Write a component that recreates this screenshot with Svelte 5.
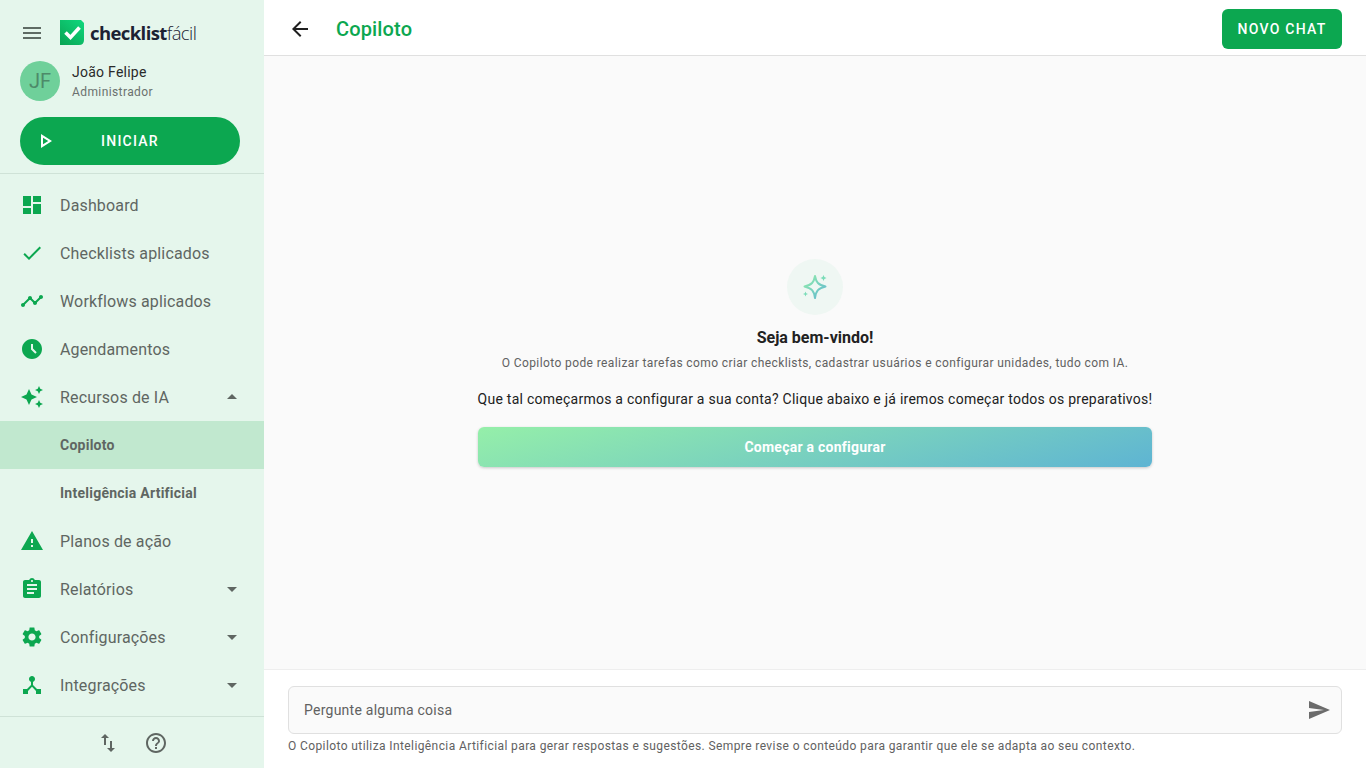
<script lang="ts">
	const navItems = [
		{ label: 'Dashboard', icon: 'M3 13h8V3H3v10zm0 8h8v-6H3v6zm10 0h8V11h-8v10zm0-18v6h8V3h-8z' },
		{ label: 'Checklists aplicados', icon: 'M9 16.17L4.83 12l-1.42 1.41L9 19 21 7l-1.41-1.41z' },
		{
			label: 'Workflows aplicados',
			icon: 'M23 8c0 1.1-.9 2-2 2-.18 0-.35-.02-.51-.07l-3.56 3.55c.05.16.07.34.07.52 0 1.1-.9 2-2 2s-2-.9-2-2c0-.18.02-.36.07-.52l-2.55-2.55c-.16.05-.34.07-.52.07s-.36-.02-.52-.07l-4.55 4.56c.05.16.07.33.07.51 0 1.1-.9 2-2 2s-2-.9-2-2 .9-2 2-2c.18 0 .35.02.51.07l4.56-4.55C8.02 9.36 8 9.18 8 9c0-1.1.9-2 2-2s2 .9 2 2c0 .18-.02.36-.07.52l2.55 2.55c.16-.05.34-.07.52-.07s.36.02.52.07l3.55-3.56C19.02 8.35 19 8.18 19 8c0-1.1.9-2 2-2s2 .9 2 2z'
		},
		{
			label: 'Agendamentos',
			icon: 'M11.99 2C6.47 2 2 6.48 2 12s4.47 10 9.99 10C17.52 22 22 17.52 22 12S17.52 2 11.99 2zm3.3 14.71L11 12.41V7h2v4.59l3.71 3.71-1.42 1.41z'
		},
		{
			label: 'Recursos de IA',
			caret: 'up',
			icon: 'M19 9l1.25-2.75L23 5l-2.75-1.25L19 1l-1.25 2.75L15 5l2.75 1.25L19 9zm-7.5.5L9 4 6.5 9.5 1 12l5.5 2.5L9 20l2.5-5.5L17 12l-5.5-2.5zM19 15l-1.25 2.75L15 19l2.75 1.25L19 23l1.25-2.75L23 19l-2.75-1.25L19 15z'
		},
		{ label: 'Copiloto', sub: true, active: true },
		{ label: 'Inteligência Artificial', sub: true },
		{ label: 'Planos de ação', icon: 'M1 21h22L12 2 1 21zm12-3h-2v-2h2v2zm0-4h-2v-4h2v4z' },
		{
			label: 'Relatórios',
			caret: 'down',
			icon: 'M19 3h-4.18C14.4 1.84 13.3 1 12 1c-1.3 0-2.4.84-2.82 2H5c-1.1 0-2 .9-2 2v14c0 1.1.9 2 2 2h14c1.1 0 2-.9 2-2V5c0-1.1-.9-2-2-2zm-7 0c.55 0 1 .45 1 1s-.45 1-1 1-1-.45-1-1 .45-1 1-1zm2 14H7v-2h7v2zm3-4H7v-2h10v2zm0-4H7V7h10v2z'
		},
		{
			label: 'Configurações',
			caret: 'down',
			icon: 'M19.14 12.94c.04-.3.06-.61.06-.94 0-.32-.02-.64-.07-.94l2.03-1.58c.18-.14.23-.41.12-.61l-1.92-3.32c-.12-.22-.37-.29-.59-.22l-2.39.96c-.5-.38-1.03-.7-1.62-.94l-.36-2.54c-.04-.24-.24-.41-.48-.41h-3.84c-.24 0-.43.17-.47.41l-.36 2.54c-.59.24-1.13.57-1.62.94l-2.39-.96c-.22-.08-.47 0-.59.22L2.74 8.87c-.12.21-.08.47.12.61l2.03 1.58c-.05.3-.09.63-.09.94s.02.64.07.94l-2.03 1.58c-.18.14-.23.41-.12.61l1.92 3.32c.12.22.37.29.59.22l2.39-.96c.5.38 1.03.7 1.62.94l.36 2.54c.05.24.24.41.48.41h3.84c.24 0 .44-.17.47-.41l.36-2.54c.59-.24 1.13-.56 1.62-.94l2.39.96c.22.08.47 0 .59-.22l1.92-3.32c.12-.22.07-.47-.12-.61l-2.01-1.58zM12 15.6c-1.98 0-3.6-1.62-3.6-3.6s1.62-3.6 3.6-3.6 3.6 1.62 3.6 3.6-1.62 3.6-3.6 3.6z'
		},
		{
			label: 'Integrações',
			caret: 'down',
			icon: 'M17 16l-4-4V8.82C14.16 8.4 15 7.3 15 6c0-1.66-1.34-3-3-3S9 4.34 9 6c0 1.3.84 2.4 2 2.82V12l-4 4H3v5h5v-3.05l4-4.2 4 4.2V21h5v-5h-4z'
		}
	];
</script>

<div class="app">
	<aside class="sidebar">
		<div class="head">
			<div class="brand">
				<svg class="menu" viewBox="0 0 24 24"><path d="M3 18h18v-2H3v2zm0-5h18v-2H3v2zm0-7v2h18V6H3z" /></svg>
				<svg class="logo" viewBox="0 0 24 25">
					<defs>
						<linearGradient id="lg" x1="0.9" y1="0" x2="0.1" y2="1">
							<stop offset="0" stop-color="#0fd67c" />
							<stop offset="1" stop-color="#0aa555" />
						</linearGradient>
					</defs>
					<path d="M0 0H21L24 3V20Q24 25 19 25H0Z" fill="url(#lg)" />
					<path d="M5.5 12.5L10.5 17.5L19.5 7.5" fill="none" stroke="#fff" stroke-width="3.6" />
				</svg>
				<span class="wordmark"><b>checklist</b><span>fácil</span></span>
			</div>
			<div class="user">
				<div class="avatar">JF</div>
				<div class="who">
					<div class="name">João Felipe</div>
					<div class="role">Administrador</div>
				</div>
			</div>
			<button class="start">
				<svg viewBox="0 0 24 24"><path d="M10 8.64L15.27 12 10 15.36V8.64M8 5v14l11-7L8 5z" /></svg>
				<span>INICIAR</span>
			</button>
		</div>

		<nav class="nav">
			{#each navItems as item}
				<div class="item" class:sub={item.sub} class:active={item.active}>
					{#if item.icon}
						<svg class="ico" viewBox="0 0 24 24"><path d={item.icon} /></svg>
					{/if}
					<span class="label">{item.label}</span>
					{#if item.caret}
						<svg class="caret" viewBox="0 0 24 24"><path d={item.caret === 'up' ? 'M7 14l5-5 5 5z' : 'M7 10l5 5 5-5z'} /></svg>
					{/if}
				</div>
			{/each}
		</nav>

		<div class="foot">
			<svg viewBox="0 0 24 24"><path d="M16 17.01V10h-2v7.01h-3L15 21l4-3.99h-3zM9 3L5 6.99h3V14h2V6.99h3L9 3z" /></svg>
			<svg viewBox="0 0 24 24"><path d="M11 18h2v-2h-2v2zm1-16C6.48 2 2 6.48 2 12s4.48 10 10 10 10-4.48 10-10S17.52 2 12 2zm0 18c-4.41 0-8-3.59-8-8s3.59-8 8-8 8 3.59 8 8-3.59 8-8 8zm0-14c-2.21 0-4 1.79-4 4h2c0-1.1.9-2 2-2s2 .9 2 2c0 2-3 1.75-3 5h2c0-2.25 3-2.5 3-5 0-2.21-1.79-4-4-4z" /></svg>
		</div>
	</aside>

	<main class="main">
		<header class="topbar">
			<svg class="back" viewBox="0 0 24 24"><path d="M20 11H7.83l5.59-5.59L12 4l-8 8 8 8 1.41-1.41L7.83 13H20v-2z" /></svg>
			<h1>Copiloto</h1>
			<button class="new">NOVO CHAT</button>
		</header>

		<section class="content">
			<div class="spark">
				<svg viewBox="0 0 28 28">
					<defs>
						<linearGradient id="sg" x1="0" y1="0" x2="1" y2="1">
							<stop offset="0" stop-color="#93eeaa" />
							<stop offset="1" stop-color="#5fb6d2" />
						</linearGradient>
					</defs>
					<path d="M12.5 3.5C13.6 9.8 15.7 12.2 23 14C15.7 15.8 13.6 18.2 12.5 25.5C11.4 18.2 9.3 15.8 2 14C9.3 12.2 11.4 9.8 12.5 3.5Z" fill="none" stroke="url(#sg)" stroke-width="2" stroke-linejoin="round" transform="translate(1.5 -.5)" />
					<path d="M22.5 2L23.4 4.1L25.5 5L23.4 5.9L22.5 8L21.6 5.9L19.5 5L21.6 4.100Z" fill="#7adcb8" />
					<path d="M4.5 18.500L5.200 20.300L7 21L5.200 21.700L4.500 23.500L3.800 21.700L2 21L3.800 20.300Z" fill="#7adcb8" />
				</svg>
			</div>
			<h2>Seja bem-vindo!</h2>
			<p class="lead">O Copiloto pode realizar tarefas como criar checklists, cadastrar usuários e configurar unidades, tudo com IA.</p>
			<p class="ask">Que tal começarmos a configurar a sua conta? Clique abaixo e já iremos começar todos os preparativos!</p>
			<button class="setup">Começar a configurar</button>
		</section>

		<footer class="composer">
			<div class="input">
				<span>Pergunte alguma coisa</span>
				<svg viewBox="0 0 24 24"><path d="M2.01 21L23 12 2.01 3 2 10l15 2-15 2z" /></svg>
			</div>
			<p>O Copiloto utiliza Inteligência Artificial para gerar respostas e sugestões. Sempre revise o conteúdo para garantir que ele se adapta ao seu contexto.</p>
		</footer>
	</main>
</div>

<style>
	:global(body) {
		margin: 0;
		font-family: Roboto, 'Liberation Sans', sans-serif;
	}

	.app {
		display: flex;
		height: 768px;
		overflow: hidden;
	}

	.sidebar {
		width: 264px;
		flex: none;
		display: flex;
		flex-direction: column;
		background: #e5f6ec;
	}

	.head {
		height: 174px;
		box-sizing: border-box;
		padding: 20px 24px 0 20px;
		border-bottom: 1px solid #cfe2d7;
	}

	.brand {
		display: flex;
		align-items: center;
		height: 25px;
	}

	.menu {
		width: 24px;
		height: 24px;
		fill: #5f6b64;
		margin-right: 16px;
	}

	.logo {
		width: 24px;
		height: 25px;
		flex: none;
		margin-right: 6px;
	}

	.wordmark {
		font-family: 'Open Sans', sans-serif;
		font-size: 18.5px;
		letter-spacing: -0.6px;
		color: #1c2233;
		line-height: 25px;
	}

	.wordmark b {
		font-weight: 700;
	}

	.wordmark span {
		font-weight: 300;
	}

	.user {
		display: flex;
		align-items: center;
		gap: 12px;
		margin-top: 16px;
	}

	.avatar {
		width: 40px;
		height: 40px;
		border-radius: 50%;
		background: #6fd09a;
		color: #4d8a69;
		font-size: 20px;
		display: flex;
		align-items: center;
		justify-content: center;
	}

	.name {
		font-size: 14px;
		line-height: 20px;
		letter-spacing: 0.25px;
		color: #2a2a2a;
	}

	.role {
		font-size: 12px;
		line-height: 18px;
		letter-spacing: 0.4px;
		color: #6b716e;
		margin-top: 1px;
	}

	.start {
		width: 220px;
		height: 48px;
		margin-top: 16px;
		border: 0;
		border-radius: 24px;
		background: #0ca750;
		color: #fff;
		display: flex;
		align-items: center;
		padding: 0 0 0 13px;
		font: 500 14px Roboto, sans-serif;
		letter-spacing: 1.25px;
	}

	.start svg {
		width: 24px;
		height: 24px;
		fill: #fff;
	}

	.start span {
		margin-left: 44px;
	}

	.nav {
		flex: 1;
		padding-top: 7px;
	}

	.item {
		height: 48px;
		display: flex;
		align-items: center;
		padding: 0 20px;
		box-sizing: border-box;
		font-size: 16px;
		letter-spacing: 0.15px;
		color: #5f6662;
	}

	.ico {
		width: 24px;
		height: 24px;
		fill: #0ca750;
		margin-right: 16px;
		flex: none;
	}

	.label {
		flex: 1;
	}

	.caret {
		width: 24px;
		height: 24px;
		fill: #5f6662;
		flex: none;
	}

	.sub {
		padding-left: 60px;
		font-size: 14px;
		font-weight: 700;
		letter-spacing: 0.25px;
	}

	.active {
		background: #c1e8cf;
	}

	.foot {
		height: 52px;
		box-sizing: border-box;
		border-top: 1px solid #cfe2d7;
		display: flex;
		align-items: center;
		justify-content: center;
		gap: 24px;
	}

	.foot svg {
		width: 24px;
		height: 24px;
		fill: #5f6662;
	}

	.main {
		flex: 1;
		min-width: 0;
		display: flex;
		flex-direction: column;
		background: #fafafa;
	}

	.topbar {
		height: 56px;
		box-sizing: border-box;
		background: #fff;
		border-bottom: 1px solid #e0e0e0;
		display: flex;
		align-items: center;
		padding: 2px 24px 0;
		flex: none;
	}

	.back {
		width: 24px;
		height: 24px;
		fill: #1f1f1f;
		margin-right: 24px;
	}

	h1 {
		flex: 1;
		margin: 0;
		font-size: 20px;
		font-weight: 500;
		color: #0ca750;
		letter-spacing: 0.15px;
	}

	.new {
		width: 120px;
		height: 40px;
		border: 0;
		border-radius: 6px;
		background: #0ca750;
		color: #fff;
		font: 500 14px Roboto, sans-serif;
		letter-spacing: 1.25px;
	}

	.content {
		flex: 1;
		display: flex;
		flex-direction: column;
		align-items: center;
		justify-content: center;
		text-align: center;
	}

	.spark {
		width: 56px;
		height: 56px;
		border-radius: 50%;
		background: #eff7f3;
		display: flex;
		align-items: center;
		justify-content: center;
	}

	.spark svg {
		width: 28px;
		height: 28px;
	}

	h2 {
		margin: 13px 0 0;
		font-size: 16px;
		line-height: 20px;
		font-weight: 700;
		color: #212121;
	}

	.lead {
		margin: 6px 0 0;
		font-size: 12px;
		line-height: 18px;
		letter-spacing: 0.4px;
		color: #616161;
	}

	.ask {
		margin: 17px 0 0;
		font-size: 14px;
		line-height: 20px;
		letter-spacing: 0.25px;
		color: #212121;
	}

	.setup {
		width: 674px;
		height: 40px;
		margin-top: 18px;
		border: 0;
		border-radius: 6px;
		background: linear-gradient(165deg, #95efa9, #5eb4d3);
		box-shadow: 0 1px 3px rgba(0, 0, 0, 0.2);
		color: #fff;
		font: 700 14px Roboto, sans-serif;
		letter-spacing: 0.25px;
	}

	.composer {
		height: 99px;
		box-sizing: border-box;
		background: #fff;
		border-top: 1px solid #eee;
		padding: 16px 24px 0;
		flex: none;
	}

	.input {
		height: 48px;
		box-sizing: border-box;
		border: 1px solid #e0e0e0;
		border-radius: 6px;
		background: #fafafa;
		display: flex;
		align-items: center;
		justify-content: space-between;
		padding: 0 10px 0 15px;
		font-size: 14px;
		letter-spacing: 0.25px;
		color: #616161;
	}

	.input svg {
		width: 24px;
		height: 24px;
		fill: #6b6b6b;
	}

	.composer p {
		margin: 3px 0 0;
		font-size: 12px;
		line-height: 18px;
		letter-spacing: 0.4px;
		color: #616161;
	}
</style>
